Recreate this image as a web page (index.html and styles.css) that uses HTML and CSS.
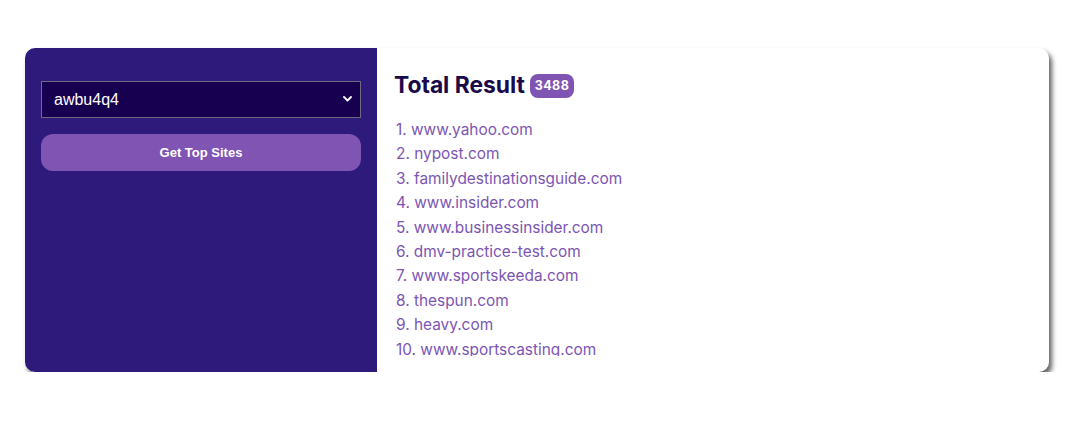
FILE: index.html
```html
<!DOCTYPE html>
<html>
<head>
<meta charset="utf-8">
<link rel="stylesheet" href="styles.css">
</head>
<body>
<div class="page">
  <div class="card">
    <aside class="side">
      <div class="select-wrap">
        <select class="select"><option>awbu4q4</option></select>
        <svg class="chev" width="9" height="6" viewBox="0 0 9 6"><path d="M1 1 L4.5 4.5 L8 1" fill="none" stroke="#fff" stroke-width="1.8" stroke-linecap="round" stroke-linejoin="round"/></svg>
      </div>
      <button class="btn">Get Top Sites</button>
    </aside>
    <main class="main">
      <h1 class="title">Total Result <span class="badge">3488</span></h1>
      <div class="list">
        <div class="item">1. www.yahoo.com</div>
        <div class="item">2. nypost.com</div>
        <div class="item">3. familydestinationsguide.com</div>
        <div class="item">4. www.insider.com</div>
        <div class="item">5. www.businessinsider.com</div>
        <div class="item">6. dmv-practice-test.com</div>
        <div class="item">7. www.sportskeeda.com</div>
        <div class="item">8. thespun.com</div>
        <div class="item">9. heavy.com</div>
        <div class="item">10. www.sportscasting.com</div>
      </div>
    </main>
  </div>
</div>
</body>
</html>
```
FILE: styles.css
```css
html, body { margin: 0; padding: 0; background: #fff; }
.page { padding: 48px 38px 0 25px; }
.card {
  display: flex;
  width: 1024px;
  height: 324px;
  border-radius: 10px;
  overflow: hidden;
  background: #fff;
  box-shadow: 3px 4px 5px rgba(0,0,0,0.62);
}
.side {
  width: 320px;
  flex: none;
  background: #2e1a7a;
  padding: 33px 16px 16px 16px;
  display: flex;
  flex-direction: column;
  gap: 16px;
}
.select-wrap { position: relative; }
.select {
  -webkit-appearance: none;
  appearance: none;
  width: 320px;
  height: 37px;
  margin: 0;
  background: #170050;
  border: 1px solid #6e6a80;
  border-radius: 0;
  color: #fff;
  font-family: "Liberation Sans", Arial, sans-serif;
  font-size: 16px;
  padding: 0 12px;
  outline: none;
  display: block;
}
.chev { position: absolute; right: 9px; top: 15px; }
.btn {
  width: 320px;
  height: 37px;
  border: none;
  border-radius: 12px;
  background: #7f54b3;
  color: #fff;
  font-family: "Liberation Sans", Arial, sans-serif;
  font-weight: 700;
  font-size: 13px;
  padding: 0;
}
.main {
  flex: 1;
  padding: 20px 17px 16px 17px;
  display: flex;
  flex-direction: column;
  font-family: Inter, "Noto Sans", sans-serif;
  min-height: 0;
}
.title {
  margin: 0;
  font-size: 22.8px;
  line-height: 33px;
  font-weight: 700;
  color: #1a0a4a;
  display: flex;
  align-items: center;
  gap: 5px;
}
.badge {
  display: inline-block;
  background: #7f54b3;
  color: #fff;
  font-size: 12.5px;
  font-weight: 700;
  line-height: 24px;
  padding: 0 5px;
  border-radius: 8px;
  letter-spacing: 0.4px;
  margin-top: 2px;
}
.list {
  margin-top: 17px;
  flex: 1;
  min-height: 0;
  overflow: hidden;
  padding-left: 2px;
}
.item {
  font-size: 15.4px;
  line-height: 24.4px;
  color: #7c55b3;
}
```
